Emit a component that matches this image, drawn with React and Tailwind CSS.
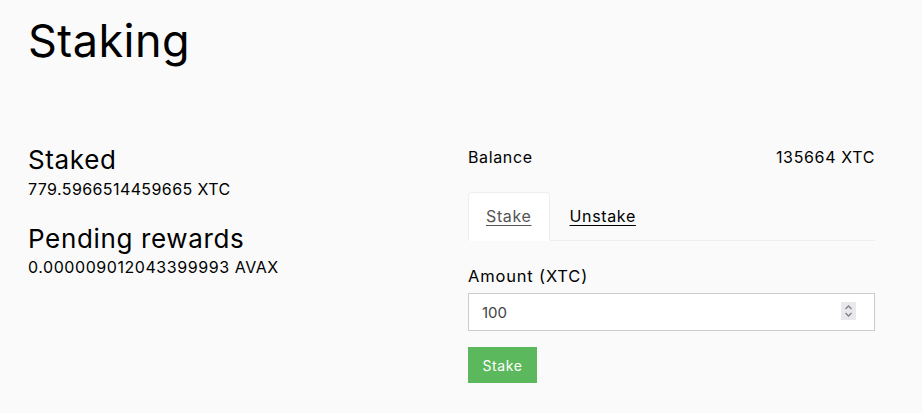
export default function App() {
  return (
    <div className="min-h-screen bg-[#fafafa] px-[28px] pt-[14px] text-black font-['Inter',sans-serif] tracking-[0.04em]">
      <h1 className="text-[45px] leading-[53px] font-normal tracking-[0.01em]">Staking</h1>

      <div className="mt-[78px] grid grid-cols-[440px_407px]">
        <div>
          <h2 className="text-[26px] leading-[30px]">Staked</h2>
          <p className="mt-[4px] text-[16px] leading-[20px] tracking-[0.025em]">779.5966514459665 XTC</p>
          <h2 className="mt-[25px] text-[26px] leading-[30px]">Pending rewards</h2>
          <p className="mt-[3px] text-[16px] leading-[20px] tracking-[0.035em]">0.000009012043399993 AVAX</p>
        </div>

        <div className="pt-[2px]">
          <div className="flex justify-between text-[16px] leading-[20px]">
            <span>Balance</span>
            <span>135664 XTC</span>
          </div>

          <div className="mt-[25px] flex border-b border-[#eeeeee]">
            <button className="-mb-px rounded-t-[4px] border border-[#eeeeee] border-b-white bg-white px-[17px] pt-[13px] pb-[14px] text-[16px] leading-[20px] text-[#555] underline underline-offset-[3px]">
              Stake
            </button>
            <button className="px-[20px] pt-[14px] pb-[14px] text-[16px] leading-[20px] underline underline-offset-[3px]">
              Unstake
            </button>
          </div>

          <label className="mt-[24px] block text-[16.5px] leading-[22px] font-normal tracking-[0.05em]">Amount (XTC)</label>
          <div className="relative mt-[6px]">
            <input
              type="text"
              defaultValue="100"
              className="block h-[38px] w-full border border-[#cccccc] bg-white px-[13px] text-[15px] tracking-normal text-[#444] outline-none"
            />
            <span className="absolute right-[19px] top-[9px] flex h-[18px] w-[15px] flex-col items-center justify-center bg-[#e8e8ed]">
              <svg width="9" height="14" viewBox="0 0 9 14" fill="none" stroke="#808085" strokeWidth="1.3">
                <path d="M1.5 5 L4.5 2 L7.5 5" />
                <path d="M1.5 9 L4.5 12 L7.5 9" />
              </svg>
            </span>
          </div>

          <button className="mt-[16px] h-[36px] w-[69px] bg-[#5cb85c] text-[14px] text-white">
            Stake
          </button>
        </div>
      </div>
    </div>
  );
}
